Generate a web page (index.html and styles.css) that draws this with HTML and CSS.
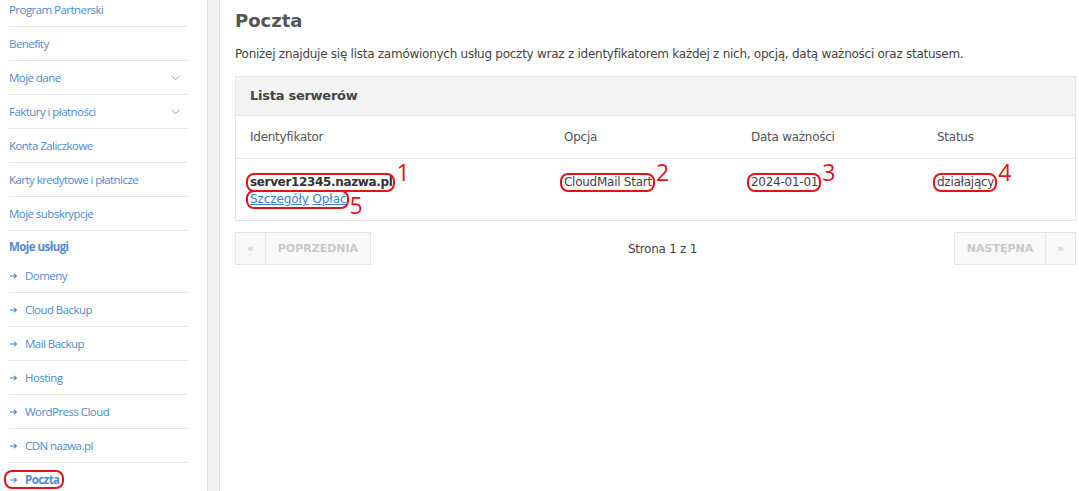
FILE: index.html
```html
<!DOCTYPE html>
<html lang="pl">
<head>
<meta charset="UTF-8">
<title>Poczta</title>
<link rel="stylesheet" href="styles.css">
</head>
<body>

<div class="layout">
    <aside class="sidebar">
        <ul class="side-menu">
            <li class="side-item"><a href="#">Program Partnerski</a></li>
            <li class="side-item"><a href="#">Benefity</a></li>
            <li class="side-item has-sub"><a href="#">Moje dane</a>
                <svg class="chev" width="9" height="6" viewBox="0 0 9 6"><path d="M0.5 0.8 L4.5 4.8 L8.5 0.8" fill="none" stroke="#7ea6d8" stroke-width="1"/></svg>
            </li>
            <li class="side-item has-sub"><a href="#">Faktury i płatności</a>
                <svg class="chev" width="9" height="6" viewBox="0 0 9 6"><path d="M0.5 0.8 L4.5 4.8 L8.5 0.8" fill="none" stroke="#7ea6d8" stroke-width="1"/></svg>
            </li>
            <li class="side-item"><a href="#">Konta Zaliczkowe</a></li>
            <li class="side-item"><a href="#">Karty kredytowe i płatnicze</a></li>
            <li class="side-item"><a href="#">Moje subskrypcje</a></li>
            <li class="side-title">Moje usługi</li>
            <li class="side-item sub"><svg class="arr" width="7" height="6" viewBox="0 0 7 6"><path d="M0 3 H6.5 M4 0.8 L6.5 3 L4 5.2" fill="none" stroke="#4a86c8" stroke-width="1.1"/></svg><a href="#">Domeny</a></li>
            <li class="side-item sub"><svg class="arr" width="7" height="6" viewBox="0 0 7 6"><path d="M0 3 H6.5 M4 0.8 L6.5 3 L4 5.2" fill="none" stroke="#4a86c8" stroke-width="1.1"/></svg><a href="#">Cloud Backup</a></li>
            <li class="side-item sub"><svg class="arr" width="7" height="6" viewBox="0 0 7 6"><path d="M0 3 H6.5 M4 0.8 L6.5 3 L4 5.2" fill="none" stroke="#4a86c8" stroke-width="1.1"/></svg><a href="#">Mail Backup</a></li>
            <li class="side-item sub"><svg class="arr" width="7" height="6" viewBox="0 0 7 6"><path d="M0 3 H6.5 M4 0.8 L6.5 3 L4 5.2" fill="none" stroke="#4a86c8" stroke-width="1.1"/></svg><a href="#">Hosting</a></li>
            <li class="side-item sub"><svg class="arr" width="7" height="6" viewBox="0 0 7 6"><path d="M0 3 H6.5 M4 0.8 L6.5 3 L4 5.2" fill="none" stroke="#4a86c8" stroke-width="1.1"/></svg><a href="#">WordPress Cloud</a></li>
            <li class="side-item sub"><svg class="arr" width="7" height="6" viewBox="0 0 7 6"><path d="M0 3 H6.5 M4 0.8 L6.5 3 L4 5.2" fill="none" stroke="#4a86c8" stroke-width="1.1"/></svg><a href="#">CDN nazwa.pl</a></li>
            <li class="side-item sub active"><span class="mark mark-side"><svg class="arr" width="7" height="6" viewBox="0 0 7 6"><path d="M0 3 H6.5 M4 0.8 L6.5 3 L4 5.2" fill="none" stroke="#4a86c8" stroke-width="1.1"/></svg><a href="#">Poczta</a></span></li>
        </ul>
    </aside>

    <div class="divider"></div>

    <main class="content">
        <h1 class="page-title">Poczta</h1>
        <p class="intro">Poniżej znajduje się lista zamówionych usług poczty wraz z identyfikatorem każdej z nich, opcją, datą ważności oraz statusem.</p>

        <div class="panel">
            <div class="panel-head">Lista serwerów</div>
            <div class="row row-head">
                <div class="cell">Identyfikator</div>
                <div class="cell">Opcja</div>
                <div class="cell">Data ważności</div>
                <div class="cell">Status</div>
            </div>
            <div class="row row-data">
                <div class="cell">
                    <span class="mark"><b class="server">server12345.nazwa.pl</b><span class="num">1</span></span>
                    <div class="links"><span class="mark"><a href="#">Szczegóły</a> <a href="#">Opłać</a><span class="num num-low">5</span></span></div>
                </div>
                <div class="cell"><span class="mark">CloudMail Start<span class="num">2</span></span></div>
                <div class="cell"><span class="mark">2024-01-01<span class="num">3</span></span></div>
                <div class="cell"><span class="mark">działający<span class="num">4</span></span></div>
            </div>
        </div>

        <div class="pager">
            <div class="pager-group">
                <span class="pg-btn pg-arrow">&laquo;</span>
                <span class="pg-btn">POPRZEDNIA</span>
            </div>
            <div class="pager-info">Strona 1 z 1</div>
            <div class="pager-group">
                <span class="pg-btn">NASTĘPNA</span>
                <span class="pg-btn pg-arrow">&raquo;</span>
            </div>
        </div>
    </main>
</div>

</body>
</html>
```

FILE: styles.css
```css
html, body {
    margin: 0;
    padding: 0;
    background: #fff;
    overflow: hidden;
}

.layout {
    display: flex;
    height: 491px;
}

/* sidebar */
.sidebar {
    width: 207px;
    flex: 0 0 207px;
    padding-left: 9px;
    box-sizing: border-box;
    overflow: hidden;
    font-family: "Open Sans", sans-serif;
    font-size: 11.5px;
    letter-spacing: -0.55px;
}

.side-menu {
    list-style: none;
    margin: -7px 0 0 0;
    padding: 0;
    width: 178px;
}

.side-item {
    display: flex;
    align-items: center;
    height: 33px;
    border-bottom: 1px solid #e6e6e6;
}

.side-item a {
    color: #4f8bcf;
    text-decoration: none;
}

.has-sub {
    justify-content: space-between;
    padding-right: 7px;
}

.chev {
    display: block;
}

.side-title {
    height: 24px;
    line-height: 24px;
    padding-top: 4px;
    font-weight: bold;
    color: #4f8bcf;
}

.side-item.sub .arr {
    margin: 0 8px 0 1px;
    flex: 0 0 7px;
}

.side-item.active {
    border-bottom: none;
}

.side-item.active a {
    font-weight: bold;
}

.divider {
    flex: 0 0 11px;
    background: #f3f3f3;
    border-left: 1px solid #e2e2e2;
    border-right: 1px solid #e2e2e2;
}

/* main */
.content {
    flex: 1;
    padding: 0 3px 0 15px;
    font-family: "DejaVu Sans", Verdana, sans-serif;
    font-size: 12px;
    letter-spacing: -0.26px;
    color: #444;
}

.page-title {
    margin: 9px 0 0 0;
    font-size: 18px;
    line-height: 24px;
    letter-spacing: 0;
    color: #555;
}

.intro {
    margin: 13px 0 0 0;
    line-height: 16px;
}

.panel {
    margin-top: 14px;
    border: 1px solid #e6e6e6;
}

.panel-head {
    background: #f4f4f4;
    border-bottom: 1px solid #e6e6e6;
    height: 38px;
    line-height: 38px;
    padding-left: 14px;
    font-weight: bold;
    font-size: 13px;
    color: #444;
}

.row {
    display: grid;
    grid-template-columns: 314px 187px 186px 1fr;
}

.row-head {
    height: 42px;
    align-items: center;
    border-bottom: 1px solid #e6e6e6;
    color: #555;
}

.row-data {
    height: 61px;
    padding-top: 16px;
    box-sizing: border-box;
    align-items: start;
}

.cell {
    padding-left: 14px;
}

.server {
    font-size: 12px;
    letter-spacing: -0.35px;
    color: #333;
}

.links {
    margin-top: 3px;
    letter-spacing: -0.1px;
}

.links a {
    color: #3c7fcf;
    text-decoration: underline;
}

/* annotations */
.mark {
    position: relative;
    display: inline-block;
}

.mark::after {
    content: "";
    position: absolute;
    left: -4px;
    right: -3px;
    top: -2px;
    bottom: -3px;
    border: 2px solid #e2141b;
    border-radius: 8px;
}

.num {
    position: absolute;
    left: 100%;
    top: -17px;
    margin-left: 4px;
    font-family: "Open Sans", sans-serif;
    font-size: 23px;
    line-height: 28px;
    letter-spacing: 0;
    color: #e2141b;
}

.num-low {
    top: -1px;
    margin-left: 3px;
}

.mark-side {
    display: inline-flex;
    align-items: center;
}

.mark-side::after {
    left: -5px;
    right: -4px;
    top: -2px;
    bottom: -2px;
}

/* pager */
.pager {
    margin-top: 11px;
    display: flex;
    justify-content: space-between;
    align-items: center;
}

.pager-group {
    display: flex;
}

.pg-btn {
    height: 31px;
    line-height: 31px;
    padding: 0 12px;
    border: 1px solid #e6e6e6;
    background: #f8f8f8;
    color: #c9c9c9;
    font-weight: bold;
    font-size: 11px;
    letter-spacing: 0;
}

.pg-btn + .pg-btn {
    border-left: none;
}

.pg-arrow {
    padding: 0 11px;
    font-weight: normal;
}

.pager-info {
    color: #444;
}
```
